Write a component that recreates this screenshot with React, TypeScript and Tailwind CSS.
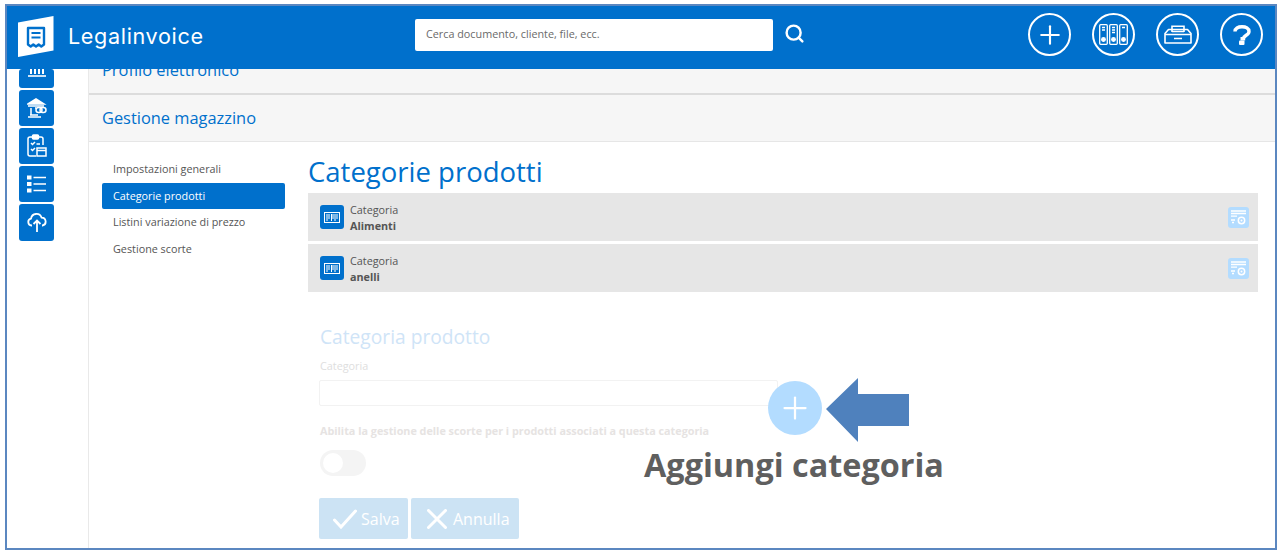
import { Plus, Search } from "lucide-react";
import type { ReactNode } from "react";

const sideNavItems = ["Impostazioni generali", "Categorie prodotti", "Listini variazione di prezzo", "Gestione scorte"];
const categories = ["Alimenti", "anelli"];

function LogoIcon() {
  return (
    <svg width="36" height="42" viewBox="0 0 36 42" fill="none">
      <path d="M0 6.5 35.5 0v34.5L0 41z" fill="#fff" />
      <path d="M10 12h16v16.5l-2.7 2-2.6-2-2.7 2-2.7-2-2.6 2-2.7-2z" stroke="#0070cc" strokeWidth="2.4" strokeLinejoin="round" />
      <path d="M13.5 17h9M13.5 21.5h9" stroke="#0070cc" strokeWidth="2.2" />
    </svg>
  );
}

function BindersIcon() {
  return (
    <svg width="29" height="21" viewBox="0 0 29 21" fill="none" stroke="#fff" strokeWidth="1.3">
      <rect x="0.7" y="0.7" width="7.6" height="19.6" rx="1" />
      <rect x="10.7" y="0.7" width="7.6" height="19.6" rx="1" />
      <rect x="20.7" y="0.7" width="7.6" height="19.6" rx="1" />
      <path d="M3 3.5h3M3 6h3M13 3.5h3M13 6h3M13 8.5h3M23 3.5h3" />
      <circle cx="4.5" cy="15.5" r="1.8" fill="#fff" />
      <circle cx="14.5" cy="15.5" r="1.8" fill="#fff" />
      <circle cx="24.5" cy="15.5" r="1.8" fill="#fff" />
    </svg>
  );
}

function ArchiveIcon() {
  return (
    <svg width="28" height="19" viewBox="0 0 28 19" fill="none" stroke="#fff" strokeWidth="1.6">
      <path d="M1 8.5v9.5h26V8.5l-3.5-4h-19z" strokeLinejoin="round" />
      <path d="M8 7V1.2h12V7" />
      <path d="M1 9.5h26M8 6.5h12M10 13.5h8" />
    </svg>
  );
}

function QuestionIcon() {
  return (
    <svg width="18" height="20" viewBox="0 0 18 20" fill="none">
      <path d="M2 6.5C2 3.5 5 1.8 9 1.8s7 1.7 7 4.6c0 4-5.5 3.6-5.5 7.4H7.5" stroke="#fff" strokeWidth="3.4" />
      <rect x="6" y="15.5" width="5.5" height="4.5" rx="1" fill="#fff" />
    </svg>
  );
}

function HeaderButton({ children }: { children: ReactNode }) {
  return (
    <div className="flex h-[43px] w-[43px] items-center justify-center rounded-full border-2 border-white">
      {children}
    </div>
  );
}

function SideButton({ children, cut }: { children: ReactNode; cut?: boolean }) {
  return (
    <div className={`flex w-[35px] justify-center rounded-[3px] bg-[#0070cc] ${cut ? "h-[19px] items-start" : "h-[36px] items-center"}`}>
      {children}
    </div>
  );
}

function BarcodeIcon() {
  return (
    <svg width="16" height="11" viewBox="0 0 16 11" fill="none" stroke="#fff">
      <rect x="0.5" y="0.5" width="15" height="10" />
      <path d="M3 2v7M5 2v5M7.5 2v7M9 2v5M11 2v7M13 2v5" />
    </svg>
  );
}

function ListSettingsIcon() {
  return (
    <svg width="15" height="15" viewBox="0 0 15 15" fill="none" stroke="#fff">
      <path d="M0 1h15M0 3.5h15M0 6.2h6" strokeWidth="1.3" />
      <path d="M0 10h4M1 12.5h2" strokeWidth="1.3" />
      <circle cx="10.5" cy="10.5" r="3.2" strokeWidth="1.5" />
      <circle cx="10.5" cy="10.5" r="1" fill="#fff" stroke="none" />
    </svg>
  );
}

export default function App() {
  return (
    <div className="h-[554px] w-[1280px] overflow-hidden bg-white pt-[4px] pl-[5px] font-['Open_Sans',sans-serif] text-[10.8px] text-[#555]">
      <div className="relative flex h-[546px] w-[1272px] flex-col overflow-hidden border-2 border-[#5b87c0]">
        <header className="relative z-10 flex h-[63px] shrink-0 items-center bg-[#0070cc]">
          <div className="mb-[2px] ml-[11px]">
            <LogoIcon />
          </div>
          <span className="mb-[2px] ml-[14px] w-[347px] font-['Inter',sans-serif] text-[21.6px] tracking-[0.65px] text-white">Legalinvoice</span>
          <div className="mb-[6px] flex h-[32px] w-[358px] items-center rounded-[2px] bg-white pl-[11px] text-[#6a6a6a]">
            Cerca documento, cliente, file, ecc.
          </div>
          <Search className="mb-[9px] ml-[11px] h-[21px] w-[21px] text-white" strokeWidth={2.8} />
          <div className="mb-[6px] ml-[223px] flex gap-[21px]">
            <HeaderButton>
              <Plus className="h-[30px] w-[30px] text-white" strokeWidth={1.7} />
            </HeaderButton>
            <HeaderButton>
              <BindersIcon />
            </HeaderButton>
            <HeaderButton>
              <ArchiveIcon />
            </HeaderButton>
            <HeaderButton>
              <QuestionIcon />
            </HeaderButton>
          </div>
        </header>

        <div className="flex min-h-0 flex-1">
          <aside className="flex w-[82px] shrink-0 flex-col gap-[2px] border-r border-[#e9e9e9] pl-[12px]">
            <SideButton cut>
              <svg width="18" height="8" viewBox="0 0 18 8" fill="none" stroke="#fff" strokeWidth="2">
                <path d="M3 0v5M7 0v5M11 0v5M15 0v5" />
                <path d="M0 7h18" strokeWidth="1.6" />
              </svg>
            </SideButton>
            <SideButton>
              <svg width="20" height="22" viewBox="0 0 20 22" fill="none" stroke="#fff" strokeWidth="1.5">
                <path d="M1 7 9 2l8 5z" fill="#fff" />
                <path d="M1 9h16M4 11v7M1 20h13M3 18h8" />
                <path d="M8 11h1" />
                <rect x="9" y="10.5" width="6" height="5" rx="2.5" />
                <rect x="13" y="10.5" width="6" height="5" rx="2.5" />
              </svg>
            </SideButton>
            <SideButton>
              <svg width="20" height="24" viewBox="0 0 20 24" fill="none" stroke="#fff" strokeWidth="1.5">
                <path d="M9 22H3a2 2 0 0 1-2-2V5a2 2 0 0 1 2-2h11a2 2 0 0 1 2 2v6" />
                <rect x="5.5" y="1" width="6" height="4" rx="1" fill="#fff" />
                <path d="m4 9 1.5 1.5L8 8M4 15l1.5 1.5L8 14M9.5 10H13" />
                <rect x="10" y="14" width="9" height="8" />
                <path d="M10 16.5h9" />
              </svg>
            </SideButton>
            <SideButton>
              <svg width="19" height="18" viewBox="0 0 19 18" fill="none">
                <rect x="0" y="0.5" width="4.5" height="4" fill="#fff" />
                <rect x="0" y="7" width="4.5" height="4" fill="#fff" />
                <rect x="0" y="13.5" width="4.5" height="4" fill="#fff" />
                <path d="M6.5 2.5H19M6.5 9H19M6.5 15.5H19" stroke="#fff" strokeWidth="1.5" />
              </svg>
            </SideButton>
            <div className="flex h-[37px] w-[35px] items-center justify-center rounded-[3px] bg-[#0070cc]">
              <svg width="20" height="19" viewBox="0 0 20 19" fill="none" stroke="#fff" strokeWidth="1.8">
                <path d="M5 12.5H4.5A3.5 3.5 0 0 1 4 5.6 5.5 5.5 0 0 1 14.6 4.6 4 4 0 0 1 15.5 12.5H15" />
                <path d="M10 19V8M6.5 11 10 7.5l3.5 3.5" />
              </svg>
            </div>
          </aside>

          <main className="relative min-w-0 flex-1">
            <div className="flex h-[26px] items-end border-b-2 border-[#dcdcdc] bg-[#f6f6f6] pb-[12px] pl-[13px]">
              <span className="text-[16.4px] leading-[22px] text-[#0070cc]">Profilo elettronico</span>
            </div>
            <div className="flex h-[47px] items-center border-b border-[#e6e6e6] bg-[#f6f6f6] pl-[13px] text-[16.4px] text-[#0070cc]">
              Gestione magazzino
            </div>

            <div className="flex pt-[14px] pl-[13px]">
              <nav className="flex w-[183px] shrink-0 flex-col">
                {sideNavItems.map((item, index) => (
                  <div
                    className={`flex items-center pl-[11px] ${index === 1 ? "h-[26px] rounded-[2px] bg-[#0070cc] text-white" : "h-[27px] text-[#555]"}`}
                    key={item}
                  >
                    {item}
                  </div>
                ))}
              </nav>

              <section className="ml-[23px] w-[950px]">
                <h1 className="h-[37px] text-[27.5px] leading-[31px] text-[#0070cc]">Categorie prodotti</h1>
                <div className="flex flex-col gap-[3px]">
                  {categories.map((name) => (
                    <div className="flex h-[48px] items-center bg-[#e6e6e6] pr-[9px] pl-[12px]" key={name}>
                      <div className="flex h-[24px] w-[24px] items-center justify-center rounded-[3px] bg-[#0070cc]">
                        <BarcodeIcon />
                      </div>
                      <div className="ml-[6px] flex-1 pt-[2px] leading-[16px]">
                        <div>Categoria</div>
                        <div className="font-bold">{name}</div>
                      </div>
                      <div className="flex h-[21px] w-[21px] items-center justify-center rounded-[3px] bg-[#b3dcff]">
                        <ListSettingsIcon />
                      </div>
                    </div>
                  ))}
                </div>

                <div className="pt-[31px] pl-[11px]">
                  <h2 className="pl-[1px] text-[19.2px] leading-[27px] text-[#cfe4f7]">Categoria prodotto</h2>
                  <label className="mt-[8px] block pl-[1px] leading-[15px] text-[#dedede]">Categoria</label>
                  <div className="mt-[7px] h-[26px] w-[459px] rounded-[2px] border border-[#f2f2f2]" />
                  <p className="mt-[17px] pl-[1px] leading-[15px] font-bold text-[#e6e3e2]">
                    Abilita la gestione delle scorte per i prodotti associati a questa categoria
                  </p>
                  <div className="mt-[12px] ml-[1px] flex h-[26px] w-[46px] items-center rounded-full bg-[#f4f4f4] pl-[3px]">
                    <div className="h-[20px] w-[20px] rounded-full bg-white" />
                  </div>
                  <div className="mt-[22px] flex gap-[3px]">
                    <div className="flex h-[41px] w-[89px] items-center gap-[4px] rounded-[2px] bg-[#cce3f4] pl-[14px] text-[16px] text-white">
                      <svg width="24" height="20" viewBox="0 0 24 20" fill="none" stroke="#fff" strokeWidth="3" strokeLinecap="round">
                        <path d="M1.5 11 8 18 22.5 2" />
                      </svg>
                      Salva
                    </div>
                    <div className="flex h-[41px] w-[108px] items-center gap-[6px] rounded-[2px] bg-[#cce3f4] pl-[16px] text-[16px] text-white">
                      <svg width="20" height="20" viewBox="0 0 20 20" fill="none" stroke="#fff" strokeWidth="3" strokeLinecap="round">
                        <path d="M1.5 1.5 18.5 18.5M18.5 1.5 1.5 18.5" />
                      </svg>
                      Annulla
                    </div>
                  </div>
                </div>
              </section>
            </div>
          </main>
        </div>

        <div className="absolute top-[375px] left-[761px] flex h-[54px] w-[54px] items-center justify-center rounded-full bg-[#b3dcff]">
          <Plus className="h-[36px] w-[36px] text-white" strokeWidth={1.5} />
        </div>
        <svg className="absolute top-[372px] left-[819px]" width="83" height="64" viewBox="0 0 83 64" fill="#4f81bd">
          <path d="M0 31 32 0v16h51v32H32v16z" />
        </svg>
        <div className="absolute top-[436px] left-[637px] text-[32.4px] leading-[44px] font-bold whitespace-nowrap text-[#5f5f5f]">
          Aggiungi categoria
        </div>
      </div>
    </div>
  );
}
